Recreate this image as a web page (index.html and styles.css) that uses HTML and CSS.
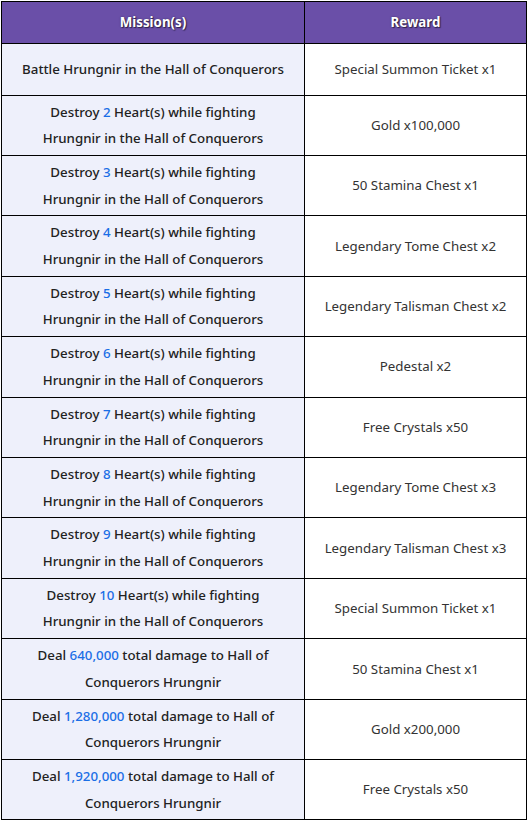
FILE: index.html
```html
<!DOCTYPE html>
<html>
<head>
<meta charset="utf-8">
<link rel="stylesheet" href="styles.css">
</head>
<body>
<table class="missions">
  <thead>
    <tr class="head-row"><th class="col-mission">Mission(s)</th><th class="col-reward">Reward</th></tr>
  </thead>
  <tbody>
    <tr class="row-single"><td class="mission">Battle Hrungnir in the Hall of Conquerors</td><td class="reward">Special Summon Ticket x1</td></tr>
    <tr><td class="mission">Destroy <span class="num">2</span> Heart(s) while fighting<br>Hrungnir in the Hall of Conquerors</td><td class="reward">Gold x100,000</td></tr>
    <tr><td class="mission">Destroy <span class="num">3</span> Heart(s) while fighting<br>Hrungnir in the Hall of Conquerors</td><td class="reward">50 Stamina Chest x1</td></tr>
    <tr><td class="mission">Destroy <span class="num">4</span> Heart(s) while fighting<br>Hrungnir in the Hall of Conquerors</td><td class="reward">Legendary Tome Chest x2</td></tr>
    <tr><td class="mission">Destroy <span class="num">5</span> Heart(s) while fighting<br>Hrungnir in the Hall of Conquerors</td><td class="reward">Legendary Talisman Chest x2</td></tr>
    <tr><td class="mission">Destroy <span class="num">6</span> Heart(s) while fighting<br>Hrungnir in the Hall of Conquerors</td><td class="reward">Pedestal x2</td></tr>
    <tr><td class="mission">Destroy <span class="num">7</span> Heart(s) while fighting<br>Hrungnir in the Hall of Conquerors</td><td class="reward">Free Crystals x50</td></tr>
    <tr><td class="mission">Destroy <span class="num">8</span> Heart(s) while fighting<br>Hrungnir in the Hall of Conquerors</td><td class="reward">Legendary Tome Chest x3</td></tr>
    <tr><td class="mission">Destroy <span class="num">9</span> Heart(s) while fighting<br>Hrungnir in the Hall of Conquerors</td><td class="reward">Legendary Talisman Chest x3</td></tr>
    <tr><td class="mission">Destroy <span class="num">10</span> Heart(s) while fighting<br>Hrungnir in the Hall of Conquerors</td><td class="reward">Special Summon Ticket x1</td></tr>
    <tr><td class="mission">Deal <span class="num">640,000</span> total damage to Hall of<br>Conquerors Hrungnir</td><td class="reward">50 Stamina Chest x1</td></tr>
    <tr><td class="mission">Deal <span class="num">1,280,000</span> total damage to Hall of<br>Conquerors Hrungnir</td><td class="reward">Gold x200,000</td></tr>
    <tr><td class="mission">Deal <span class="num">1,920,000</span> total damage to Hall of<br>Conquerors Hrungnir</td><td class="reward">Free Crystals x50</td></tr>
  </tbody>
</table>
</body>
</html>
```
FILE: styles.css
```css
html, body {
  margin: 0;
  padding: 0;
  background: #ffffff;
}
body {
  padding: 1px 0 0 1px;
  font-family: "Noto Sans", "Open Sans", sans-serif;
  font-size: 13.3px;
  color: #222;
}
.missions {
  border-collapse: collapse;
  width: 526px;
  table-layout: fixed;
}
.missions th,
.missions td {
  border: 1px solid #000;
  text-align: center;
  vertical-align: middle;
  padding: 3px 4px;
  line-height: 26.7px;
}
.col-mission { width: 294px; }
.col-reward { width: auto; }
.head-row th {
  background: #6a4fa8;
  color: #fff;
  font-weight: 700;
  height: 41px;
  padding: 0 4px;
  text-shadow: 1px 1px 1px rgba(0,0,0,0.55), 0 0 2px rgba(0,0,0,0.35);
}
.row-single td {
  height: 44.5px;
}
.mission {
  background: #eef0fb;
  font-weight: 500;
  color: #222;
}
.reward {
  background: #fff;
  color: #333;
  font-weight: 400;
}
.num {
  color: #1a6ee6;
}
```
